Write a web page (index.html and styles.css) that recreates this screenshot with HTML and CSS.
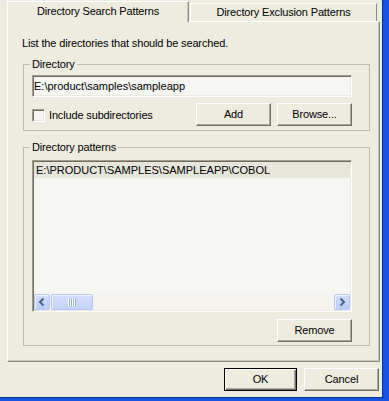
FILE: index.html
```html
<!DOCTYPE html>
<html>
<head>
<meta charset="utf-8">
<link rel="stylesheet" href="styles.css">
</head>
<body>
<div class="window">
  <div class="tabs">
    <div class="tab tab-active">Directory Search Patterns</div>
    <div class="tab tab-idle">Directory Exclusion Patterns</div>
  </div>
  <div class="panel">
    <p class="desc">List the directories that should be searched.</p>
    <fieldset class="group group-dir">
      <legend>Directory</legend>
      <div class="input">E:\product\samples\sampleapp</div>
      <div class="row">
        <label class="check"><span class="box"></span><span>Include subdirectories</span></label>
        <div class="btns">
          <button class="btn">Add</button>
          <button class="btn">Browse...</button>
        </div>
      </div>
    </fieldset>
    <fieldset class="group group-pat">
      <legend>Directory patterns</legend>
      <div class="list">
        <div class="items">
          <div class="item sel">E:\PRODUCT\SAMPLES\SAMPLEAPP\COBOL</div>
        </div>
        <div class="hscroll">
          <div class="sb-btn">
            <svg width="14" height="14" viewBox="0 0 14 14"><path d="M8.5 3.5 L5 7 L8.5 10.5" fill="none" stroke="#4D6185" stroke-width="2"/></svg>
          </div>
          <div class="track">
            <div class="thumb"><span class="grip"></span></div>
          </div>
          <div class="sb-btn">
            <svg width="14" height="14" viewBox="0 0 14 14"><path d="M5.5 3.5 L9 7 L5.5 10.5" fill="none" stroke="#4D6185" stroke-width="2"/></svg>
          </div>
        </div>
      </div>
      <div class="row-end">
        <button class="btn">Remove</button>
      </div>
    </fieldset>
  </div>
  <div class="footer">
    <button class="btn btn-default">OK</button>
    <button class="btn btn-cancel">Cancel</button>
  </div>
</div>
</body>
</html>
```

FILE: styles.css
```css
* {
  box-sizing: border-box;
}

html,
body {
  margin: 0;
  padding: 0;
}

body {
  font-family: "Liberation Sans", Arial, sans-serif;
  font-size: 11px;
  letter-spacing: -0.15px;
  color: #000;
  background: #EEECDF;
}

.window {
  width: 389px;
  height: 401px;
  background: #EEECDF;
  border-right: 6px solid #1652DE;
  border-bottom: 3px solid #1652DE;
  box-shadow: inset -1px -1px 0 #0A2F9E;
  display: flex;
  flex-direction: column;
}

/* Tabs */
.tabs {
  display: flex;
  align-items: flex-start;
  height: 21px;
  padding-left: 7px;
}

.tab {
  background: #EEECDF;
  text-align: center;
  white-space: nowrap;
}

.tab-active {
  position: relative;
  z-index: 1;
  width: 182px;
  height: 21px;
  margin-top: 1px;
  border-top: 1px solid #FFFFFF;
  border-left: 1px solid #FFFFFF;
  border-right: 1px solid #8E8C80;
  box-shadow: inset -1px 0 0 #C9C6B6;
  line-height: 18px;
}

.tab-idle {
  width: 187px;
  height: 18px;
  margin-top: 3px;
  margin-left: 1px;
  border-top: 1px solid #FFFFFF;
  border-left: 1px solid #FFFFFF;
  border-right: 1px solid #8E8C80;
  line-height: 17px;
}

/* Panel */
.panel {
  margin-left: 7px;
  width: 373px;
  height: 341px;
  border-top: 1px solid #FFFFFF;
  border-left: 1px solid #FFFFFF;
  border-right: 1px solid #8E8C80;
  border-bottom: 1px solid #8E8C80;
  box-shadow: inset -1px -1px 0 #C9C6B6;
  padding-left: 15px;
}

.desc {
  margin: 15px 0 0 -1px;
  line-height: 13px;
}

/* Group boxes */
.group {
  width: 347px;
  margin: 0;
  min-inline-size: 0;
  border: 1px solid #BDBAAA;
  padding: 4px 17px 4px 8px;
}

.group legend {
  padding: 0 2px;
  margin-left: -2px;
  line-height: 13px;
}

.group-dir {
  margin-top: 8px;
}

.group-pat {
  margin-top: 10px;
  padding-top: 6px;
  padding-bottom: 3px;
}

/* Sunken fields */
.input,
.list,
.box {
  border: 1px solid;
  border-color: #A19E8E #FFFFFF #FFFFFF #A19E8E;
  box-shadow: inset 1px 1px 0 #6E6C62, inset -1px -1px 0 #ECEAE0;
  background: #F6F6F3;
}

.input {
  width: 320px;
  height: 22px;
  padding-left: 1px;
  line-height: 20px;
  letter-spacing: 0;
  white-space: nowrap;
}

.row {
  display: flex;
  align-items: center;
  margin-top: 6px;
  height: 23px;
}

.check {
  display: flex;
  align-items: center;
  gap: 4px;
  margin-top: 1px;
}

.box {
  width: 13px;
  height: 13px;
}

.btns {
  margin-left: auto;
  display: flex;
  gap: 6px;
}

/* Buttons */
.btn {
  font-family: inherit;
  font-size: inherit;
  letter-spacing: inherit;
  color: #000;
  width: 75px;
  height: 23px;
  padding: 0;
  background: #EEECDF;
  border: 1px solid;
  border-color: #FFFFFF #716F64 #716F64 #FFFFFF;
  box-shadow: inset -1px -1px 0 #ACA899;
  line-height: 21px;
  text-align: center;
}

.btn-default {
  width: 73px;
  border-color: #000000;
  box-shadow: inset 1px 1px 0 #FFFFFF, inset -1px -1px 0 #716F64, inset -2px -2px 0 #ACA899;
}

/* List */
.list {
  width: 320px;
  height: 152px;
  display: flex;
  flex-direction: column;
  padding: 1px;
}

.items {
  flex: 1;
}

.item {
  height: 16px;
  line-height: 16px;
  padding-left: 2px;
  letter-spacing: 0;
  white-space: nowrap;
}

.item.sel {
  background: #E7E6DB;
}

.hscroll {
  display: flex;
  height: 16px;
  background: #F4F3EE;
}

.sb-btn {
  width: 16px;
  height: 16px;
  border: 1px solid #B6C8F5;
  border-radius: 2px;
  background: linear-gradient(#D2DEFC, #BACDF8);
  box-shadow: inset 1px 1px 0 #EEF3FE;
  display: flex;
  align-items: center;
  justify-content: center;
}

.track {
  flex: 1;
  display: flex;
  align-items: stretch;
  padding-left: 1px;
}

.thumb {
  width: 42px;
  border: 1px solid #B3C6F3;
  border-radius: 2px;
  background: linear-gradient(#D3DFFC, #C3D4FA);
  box-shadow: inset 1px 1px 0 #EEF3FE;
  display: flex;
  align-items: center;
  justify-content: center;
}

.grip {
  width: 8px;
  height: 7px;
  background: repeating-linear-gradient(90deg, #FFFFFF 0 1px, #8EA8E8 1px 2px);
}

.row-end {
  display: flex;
  justify-content: flex-end;
  margin-top: 7px;
}

/* Footer */
.footer {
  display: flex;
  justify-content: flex-end;
  gap: 7px;
  margin-top: 6px;
  padding-right: 4px;
}
```
